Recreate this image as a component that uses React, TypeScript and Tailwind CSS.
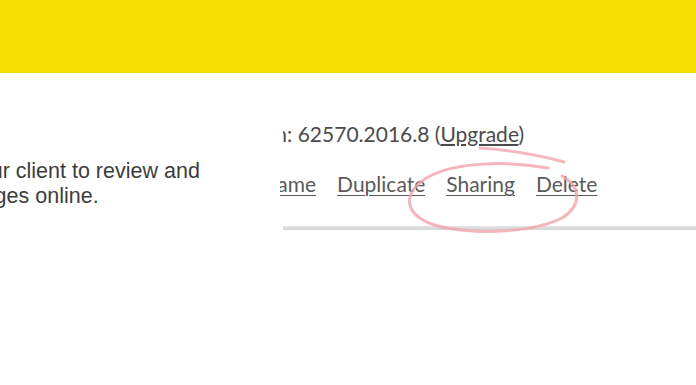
const links = ["Rename", "Duplicate", "Sharing", "Delete"];

const App = () => {
  return (
    <div className="relative h-[385px] w-[696px] overflow-hidden bg-white">
      <div className="h-[73px] bg-[#f6de00]" />

      <div className="flex">
        <div className="w-[280px] shrink-0 overflow-hidden pt-[86px] font-['Liberation_Sans',Arial,sans-serif] text-[21.5px] leading-[25px] text-[#3d3d3d]">
          <div className="-ml-[32px] whitespace-nowrap">your client to review and</div>
          <div className="-ml-[52px] whitespace-nowrap">changes online.</div>
        </div>

        <div className="min-w-0 flex-1 overflow-hidden pt-[48px] font-['Lato',sans-serif] text-[21px] leading-[25px]">
          <div className="ml-[3px] overflow-hidden">
            <div className="-ml-[65px] whitespace-nowrap text-[#4b4b4b]">
              Version: 62570.2016.8 (<span className="underline underline-offset-2">Upgrade</span>)
            </div>
          </div>
          <div className="-ml-[38px] mt-[25px] flex gap-[21px] whitespace-nowrap text-[#5a5a5a]">
            {links.map((link) => (
              <span key={link} className="underline decoration-1 underline-offset-[3px]">
                {link}
              </span>
            ))}
          </div>
          <div className="ml-[3px] mt-[30px] h-[4px] bg-gradient-to-b from-[#e4e4e4] to-[#d4d4d4]" />
        </div>
      </div>

      {/* hand-drawn highlight around Sharing */}
      <svg
        className="pointer-events-none absolute left-0 top-0"
        width="696"
        height="385"
        viewBox="0 0 696 385"
        fill="none"
      >
        <path
          d="M480 148 Q525 151 564 162"
          stroke="#f2a2ac"
          strokeWidth="3"
          strokeLinecap="round"
          opacity="0.75"
        />
        <path
          d="M548 168 C505 160 455 163 430 176 C400 192 402 218 442 227 C480 235 534 232 562 218 C583 205 580 186 562 176"
          stroke="#f2a2ac"
          strokeWidth="3"
          strokeLinecap="round"
          opacity="0.8"
        />
      </svg>
    </div>
  );
};

export default App;
